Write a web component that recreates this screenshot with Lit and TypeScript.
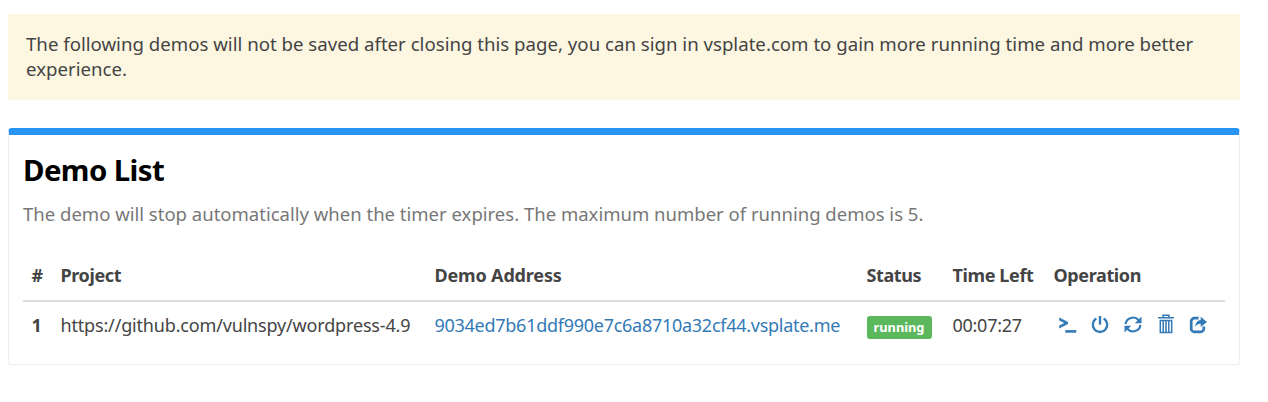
import { LitElement, html, css, svg } from 'lit';
import { customElement } from 'lit/decorators.js';

const icons = {
  console: svg`<path d="M2.2 3.6 11 8.1v1.9L2.2 14.4v-3L7.3 9 2.2 6.6z"/><path d="M8.3 16.1h11v2.6h-11z"/>`,
  power: svg`<path d="M6.3 4.6a7.2 7.2 0 1 0 7.4 0" fill="none" stroke="currentColor" stroke-width="2.3"/><path d="M8.8 2h2.4v8.6H8.8z"/>`,
  refresh: svg`<path d="M2.6 10.2A7.4 7.4 0 0 1 15.6 6.2M17.4 10.8A7.4 7.4 0 0 1 4.4 14.8" fill="none" stroke="currentColor" stroke-width="2.1"/><path d="M18.5 2.5v6.7h-6.7zM1.5 18.5v-6.7h6.7z"/>`,
  trash: svg`<path d="M7.1 3V1.3h5.8V3M2 3.8h16" fill="none" stroke="currentColor" stroke-width="1.6"/><path d="M3.8 6.4h12.4M4.3 6.4v12h11.4v-12M7.2 6.4v12M10 6.4v12M12.8 6.4v12" fill="none" stroke="currentColor" stroke-width="1.5"/>`,
  share: svg`<path d="M10.6 4.2H6.3a3.1 3.1 0 0 0-3.1 3.1v7.4a3.1 3.1 0 0 0 3.1 3.1h6.4a3.1 3.1 0 0 0 3.1-3.1v-2.2" fill="none" stroke="currentColor" stroke-width="2.7"/><path d="M12.7 2.8 19 8l-6.3 5v-3.2c-2.7 0-4.3 1-5.5 3.3.2-4 2-6.6 5.5-7z"/>`,
};

@customElement('op-icon')
class OpIcon extends LitElement {
  static properties = { name: {} };
  declare name: keyof typeof icons;
  static styles = css`
    :host { display: block; width: 20px; height: 20px; }
    svg { display: block; fill: currentColor; }
  `;
  render() {
    return html`<svg width="20" height="20" viewBox="0 0 20 20">${icons[this.name]}</svg>`;
  }
}

@customElement('app-root')
class AppRoot extends LitElement {
  static styles = css`
    :host {
      display: block; height: 402px; box-sizing: border-box; overflow: hidden;
      padding: 14px 28px 0 8px; background: #fff; color: #444;
      font-family: "Noto Sans", "Open Sans", sans-serif; white-space: nowrap;
    }
    .notice {
      box-sizing: border-box; height: 86px; padding: 17px 18px; background: #fdf7e2;
      font-size: 18.65px; line-height: 25px; white-space: normal;
    }
    .notice p { margin: 0 -10px 0 0; }
    .card {
      box-sizing: border-box; height: 237px; margin-top: 28px; padding: 0 14px;
      border: 1px solid #eee; border-top: 7px solid #2793f3; border-radius: 4px; background: #fff;
    }
    h1 { margin: 0; padding-top: 15px; font-size: 29.4px; letter-spacing: -0.6px; line-height: 40px; color: #000; }
    .lead { margin: 0; padding-top: 11px; font-size: 18.52px; line-height: 26px; color: #777; }
    .row {
      display: grid; align-items: center; font-size: 18px; letter-spacing: -0.27px;
      grid-template-columns: 29px 374px 432px 86px 101px 1fr; padding-left: 8.5px;
    }
    .head {
      height: 50px; margin-top: 23px; border-bottom: 2px solid #ddd;
      font-weight: 700; letter-spacing: -0.38px;
    }
    .head .wide { letter-spacing: -0.16px; }
    .body { height: 46px; }
    .num { font-weight: 700; }
    .url { letter-spacing: -0.17px; }
    a { color: #337ab7; text-decoration: none; }
    .badge {
      display: inline-block; box-sizing: border-box; width: 65px; height: 23px; margin-top: 5px;
      border-radius: 3px; background: #5cb85c; color: #fff; text-align: center;
      font-size: 12.8px; letter-spacing: 0; line-height: 22px; font-weight: 700;
    }
    .ops { display: flex; gap: 13px; padding-left: 3px; margin-bottom: 2px; color: #337ab7; }
    .ops op-icon:last-child { margin-left: -1px; }
  `;
  render() {
    return html`
      <div class="notice"><p>The following demos will not be saved after closing this page, you can sign in vsplate.com to gain more running time and more better experience.</p></div>
      <section class="card">
        <h1>Demo List</h1>
        <p class="lead">The demo will stop automatically when the timer expires. The maximum number of running demos is 5.</p>
        <div class="row head">
          <span>#</span><span>Project</span><span class="wide">Demo Address</span><span>Status</span><span>Time Left</span><span>Operation</span>
        </div>
        <div class="row body">
          <span class="num">1</span>
          <span class="url">https://github.com/vulnspy/wordpress-4.9</span>
          <a>9034ed7b61ddf990e7c6a8710a32cf44.vsplate.me</a>
          <span class="badge">running</span>
          <span>00:07:27</span>
          <div class="ops">${Object.keys(icons).map((n) => html`<op-icon .name=${n}></op-icon>`)}</div>
        </div>
      </section>`;
  }
}
